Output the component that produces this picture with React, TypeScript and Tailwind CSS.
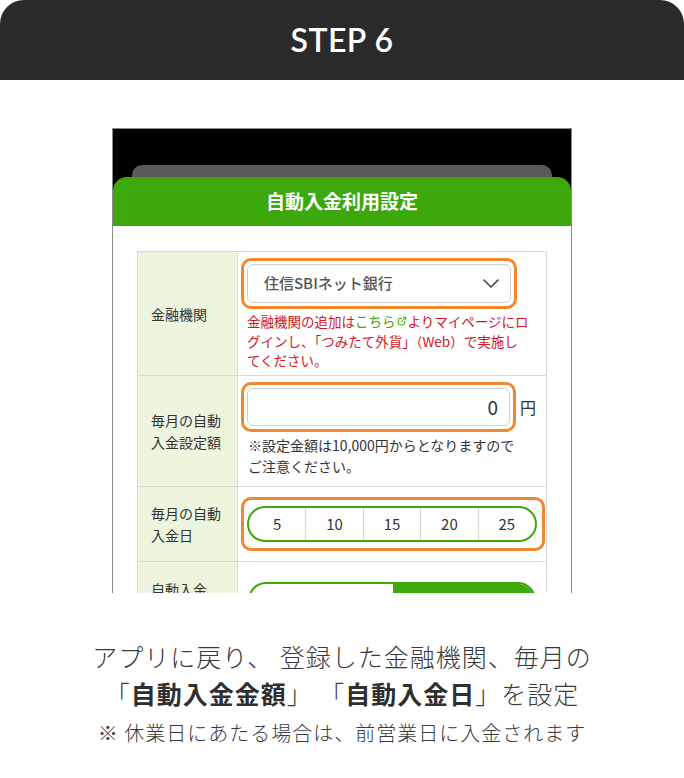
import React from 'react';
import { ExternalLink } from 'lucide-react';

const days = [5, 10, 15, 20, 25];

const Label = ({ children }: { children: React.ReactNode }) => (
  <div className="w-[100px] shrink-0 self-stretch flex items-center bg-[#eef5df] border-r border-[#d9d9d9] pl-[13px] text-[14px] leading-[22px] text-[#333]">
    <div>{children}</div>
  </div>
);

const App = () => {
  return (
    <div className="w-[684px] h-[778px] bg-white overflow-hidden">
      {/* Step heading */}
      <div className="h-20 rounded-t-[24px] bg-[#2a2a2a] flex items-center justify-center">
        <h1 className="font-['Lato',sans-serif] font-semibold text-[32px] leading-none tracking-[0.5px] text-white">STEP 6</h1>
      </div>

      {/* App screen */}
      <div className="pt-12">
        <div className="mx-auto w-[460px] h-[465px] overflow-hidden border-x border-t border-[#8a8a8a] bg-black font-['Noto_Sans_CJK_JP',sans-serif]">
          <div className="pt-[36px] px-[19px]">
            <div className="h-[12px] rounded-t-[10px] bg-[#5a5a5a]" />
          </div>
          <div className="h-[49px] rounded-t-[14px] bg-[#3ca80b] flex items-center justify-center">
            <span className="text-[19px] font-bold text-white">自動入金利用設定</span>
          </div>

          <div className="bg-white px-[24px] pt-[25px] h-full">
            <div className="border-x border-t border-[#d9d9d9]">
              {/* Bank */}
              <div className="flex h-[124px] border-b border-[#d9d9d9]">
                <Label>金融機関</Label>
                <div className="pl-[3px] pt-[6px]">
                  <div className="w-[276px] rounded-[10px] border-[3px] border-[#f0892e] p-[3px]">
                    <div className="h-[39px] rounded-[6px] border border-[#cfcfcf] bg-white flex items-center justify-between pl-[16px] pr-[11px]">
                      <span className="text-[15px] font-medium text-[#555]">住信SBIネット銀行</span>
                      <svg width="16" height="9" viewBox="0 0 16 9" fill="none">
                        <path d="M1 1l7 7 7-7" stroke="#444" strokeWidth="1.6" strokeLinecap="round" strokeLinejoin="round" />
                      </svg>
                    </div>
                  </div>
                  <p className="mt-[3px] pl-[6px] text-[13.5px] leading-[19.5px] text-[#d2152a]">
                    金融機関の追加は
                    <span className="text-[#3ca80b]">こちら</span>
                    <ExternalLink className="inline-block align-[1px] mx-[1px] text-[#3ca80b]" size={10} strokeWidth={2.4} />
                    よりマイページにロ
                    <br />
                    グインし、「つみたて外貨」（Web）で実施し
                    <br />
                    てください。
                  </p>
                </div>
              </div>

              {/* Monthly amount */}
              <div className="flex h-[111px] border-b border-[#d9d9d9]">
                <Label>
                  毎月の自動
                  <br />
                  入金設定額
                </Label>
                <div className="pl-[3px] pt-[6px]">
                  <div className="flex items-center gap-[4px]">
                    <div className="w-[275px] rounded-[10px] border-[3px] border-[#f0892e] p-[3px]">
                      <div className="h-[38px] rounded-[6px] border border-[#cfcfcf] bg-white flex items-center justify-end pr-[11px]">
                        <span className="text-[19px] text-[#333]">0</span>
                      </div>
                    </div>
                    <span className="text-[16px] text-[#333]">円</span>
                  </div>
                  <p className="mt-[3px] pl-[7px] text-[14px] leading-[21px] text-[#333]">
                    ※設定金額は10,000円からとなりますので
                    <br />
                    ご注意ください。
                  </p>
                </div>
              </div>

              {/* Monthly day */}
              <div className="flex h-[75px] border-b border-[#d9d9d9]">
                <Label>
                  毎月の自動
                  <br />
                  入金日
                </Label>
                <div className="pl-[3px] pt-[10px]">
                  <div className="w-[304px] rounded-[10px] border-[3px] border-[#f0892e] py-[6px] pl-[3px]">
                    <div className="w-[290px] h-[36px] rounded-full border-2 border-[#3ca80b] flex overflow-hidden">
                      {days.map((d, i) => (
                        <div
                          key={d}
                          className={`flex-1 flex items-center justify-center text-[15px] text-[#333] ${i > 0 ? 'border-l border-[#d5d5d5]' : ''}`}
                        >
                          {d}
                        </div>
                      ))}
                    </div>
                  </div>
                </div>
              </div>

              {/* Auto deposit on/off */}
              <div className="flex h-[76px]">
                <Label>
                  自動入金
                  <br />
                  設定
                </Label>
                <div className="pl-[10px] pt-[20px]">
                  <div className="w-[288px] h-[36px] rounded-full border-2 border-[#3ca80b] flex overflow-hidden">
                    <div className="w-[143px] flex items-center justify-center text-[15px] text-[#555]">停止する</div>
                    <div className="flex-1 bg-[#3ca80b] flex items-center justify-center text-[15px] text-white">利用する</div>
                  </div>
                </div>
              </div>
            </div>
          </div>
        </div>
      </div>

      {/* Caption */}
      <div className="mt-[45px] text-center font-['Noto_Sans_CJK_JP',sans-serif] text-[#3a3a3a]">
        <p className="text-[25px] leading-[37px] tracking-[1px] font-light">
          アプリに戻り、 登録した金融機関、毎月の
          <br />
          「<span className="font-bold text-[#2f2f2f]">自動入金金額</span>」 「
          <span className="font-bold text-[#2f2f2f]">自動入金日</span>」を設定
        </p>
        <p className="mt-[6px] text-[20px] leading-[30px] tracking-[1px] font-light">
          ※ 休業日にあたる場合は、前営業日に入金されます
        </p>
      </div>
    </div>
  );
};

export default App;
